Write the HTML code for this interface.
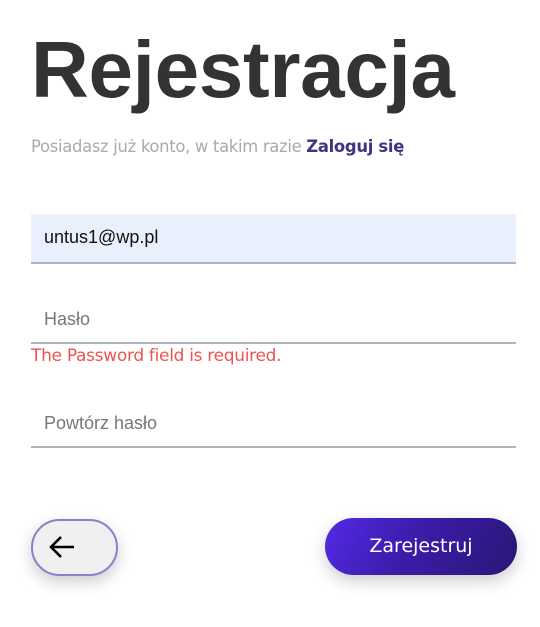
<!DOCTYPE html>
<html><head><meta charset="utf-8"><style>
body{margin:0;width:540px;height:627px;background:#fff;font-family:"Liberation Sans",sans-serif;position:relative;overflow:hidden}
.abs{position:absolute}
h1{position:absolute;left:31px;top:24px;margin:0;font-size:80px;font-weight:bold;color:#333;line-height:92px;letter-spacing:-0.3px}
.sub{left:31px;top:137px;color:#aaa;font-family:"DejaVu Sans",sans-serif;font-size:16.4px;letter-spacing:-0.3px}
.sub b{color:#3f3382}
.inp{left:31px;width:485px;border-bottom:2px solid #b2b2ba;font-size:18px}
.inp span{position:absolute;left:13px}
.err{left:31px;top:346px;color:#ef5350;font-family:"DejaVu Sans",sans-serif;font-size:17px;letter-spacing:-0.3px}
.btn{border-radius:30px;box-shadow:0 6px 16px rgba(0,0,0,0.2)}
</style></head><body>
<h1>Rejestracja</h1>
<div class="abs sub">Posiadasz już konto, w takim razie <b>Zaloguj się</b></div>
<div class="abs inp" style="top:214px;height:48px;background:#e8f0fe"><span style="top:13px;color:#111">untus1@wp.pl</span></div>
<div class="abs inp" style="top:294px;height:48px"><span style="top:15px;color:#777">Hasło</span></div>
<div class="abs err">The Password field is required.</div>
<div class="abs inp" style="top:398px;height:48px"><span style="top:15px;color:#777">Powtórz hasło</span></div>
<div class="abs btn" style="left:31px;top:519px;width:83px;height:53px;border:2px solid #8a80cc;background:#f0f0f0">
<svg class="abs" style="left:15px;top:14px" width="28" height="24" viewBox="0 0 28 24"><path d="M26 12H3M13 2L3 12l10 10" fill="none" stroke="#000" stroke-width="2.6"/></svg></div>
<div class="abs btn" style="left:325px;top:518px;width:192px;height:57px;background:linear-gradient(120deg,#5429e8 0%,#3b1ca8 45%,#2a1675 100%);color:#fff;text-align:center;line-height:57px;font-family:'DejaVu Sans',sans-serif;font-size:19px">Zarejestruj</div>
</body></html>
